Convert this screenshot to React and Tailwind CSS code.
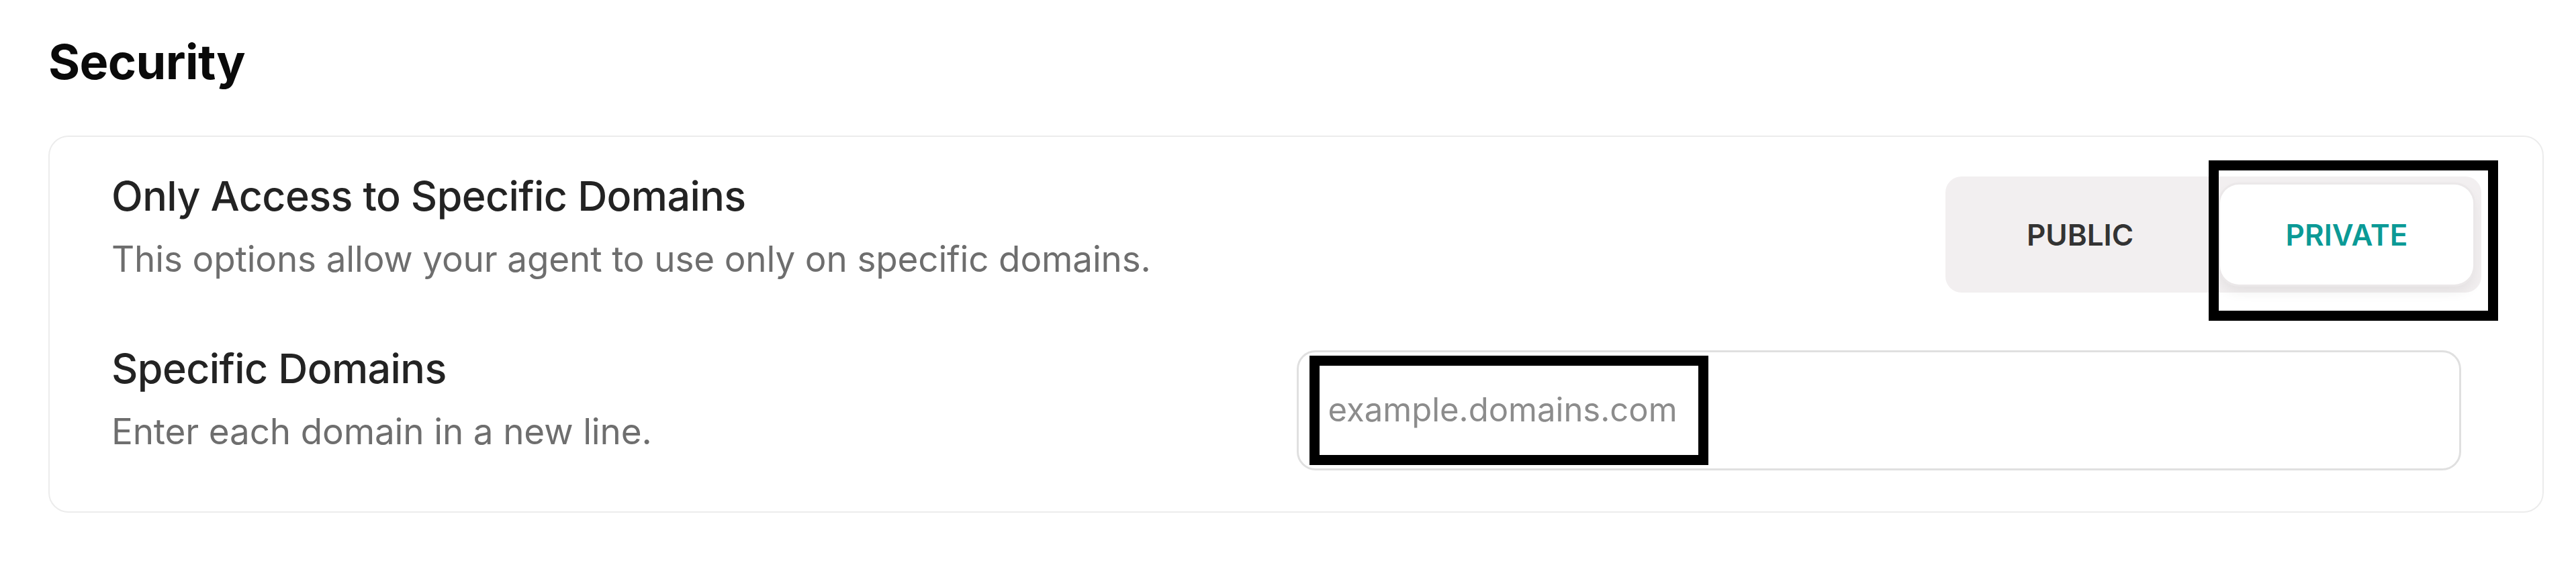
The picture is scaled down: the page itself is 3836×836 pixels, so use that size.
export default function App() {
  return (
    <div className="min-h-[836px] w-full bg-white pl-[72px] pr-[48px] pt-[48px] [font-family:Inter,'Noto_Sans',sans-serif]">
      <h1 className="text-[72px] font-bold leading-[88px] tracking-[-0.6px] text-[#0a0a0a]">Security</h1>

      <div className="mt-[66px] rounded-[30px] border-2 border-[#ececec] pb-[61px] pl-[92px] pr-[91px] pt-[52px]">
        {/* Row 1 */}
        <div className="flex items-start justify-between">
          <div>
            <p className="text-[61px] font-medium leading-[72px] tracking-[-0.6px] text-[#232323]">
              Only Access to Specific Domains
            </p>
            <p className="mt-[26px] text-[53px] leading-[64px] tracking-[-0.15px] text-[#6e6e6e]">
              This options allow your agent to use only on specific domains.
            </p>
          </div>

          <div className="relative mt-[7px] flex gap-[20px] rounded-[24px] bg-[#f2eff0] p-[12px]">
            <button className="flex h-[149px] w-[377px] items-center justify-center rounded-[28px] text-[44px] font-semibold text-[#333333]">
              PUBLIC
            </button>
            <button className="flex h-[149px] w-[377px] items-center justify-center rounded-[28px] bg-white text-[44px] font-semibold text-[#0b9a96] shadow-[0_0_0_3px_#ebe8e9,0_10px_20px_rgba(0,0,0,0.07)]">
              PRIVATE
            </button>
            <div className="pointer-events-none absolute left-[392px] top-[-24px] h-[239px] w-[431px] border-[15px] border-black" />
          </div>
        </div>

        {/* Row 2 */}
        <div className="mt-[77px] grid grid-cols-2">
          <div>
            <p className="text-[61px] font-medium leading-[72px] tracking-[-0.6px] text-[#232323]">
              Specific Domains
            </p>
            <p className="mt-[26px] text-[53px] leading-[64px] tracking-[-0.15px] text-[#6e6e6e]">
              Enter each domain in a new line.
            </p>
          </div>

          <div className="relative mr-[30px] mt-[9px] h-[179px]">
            <textarea
              rows={1}
              placeholder="example.domains.com"
              className="block h-full w-full resize-none rounded-[28px] border-[3px] border-[#e0e0e0] bg-white pl-[44px] pt-[55px] text-[49px] leading-[62px] text-[#232323] outline-none placeholder:text-[#8c8c8c]"
            />
            <div className="pointer-events-none absolute left-[19px] top-[8px] h-[163px] w-[594px] border-[15px] border-black" />
          </div>
        </div>
      </div>
    </div>
  );
}
